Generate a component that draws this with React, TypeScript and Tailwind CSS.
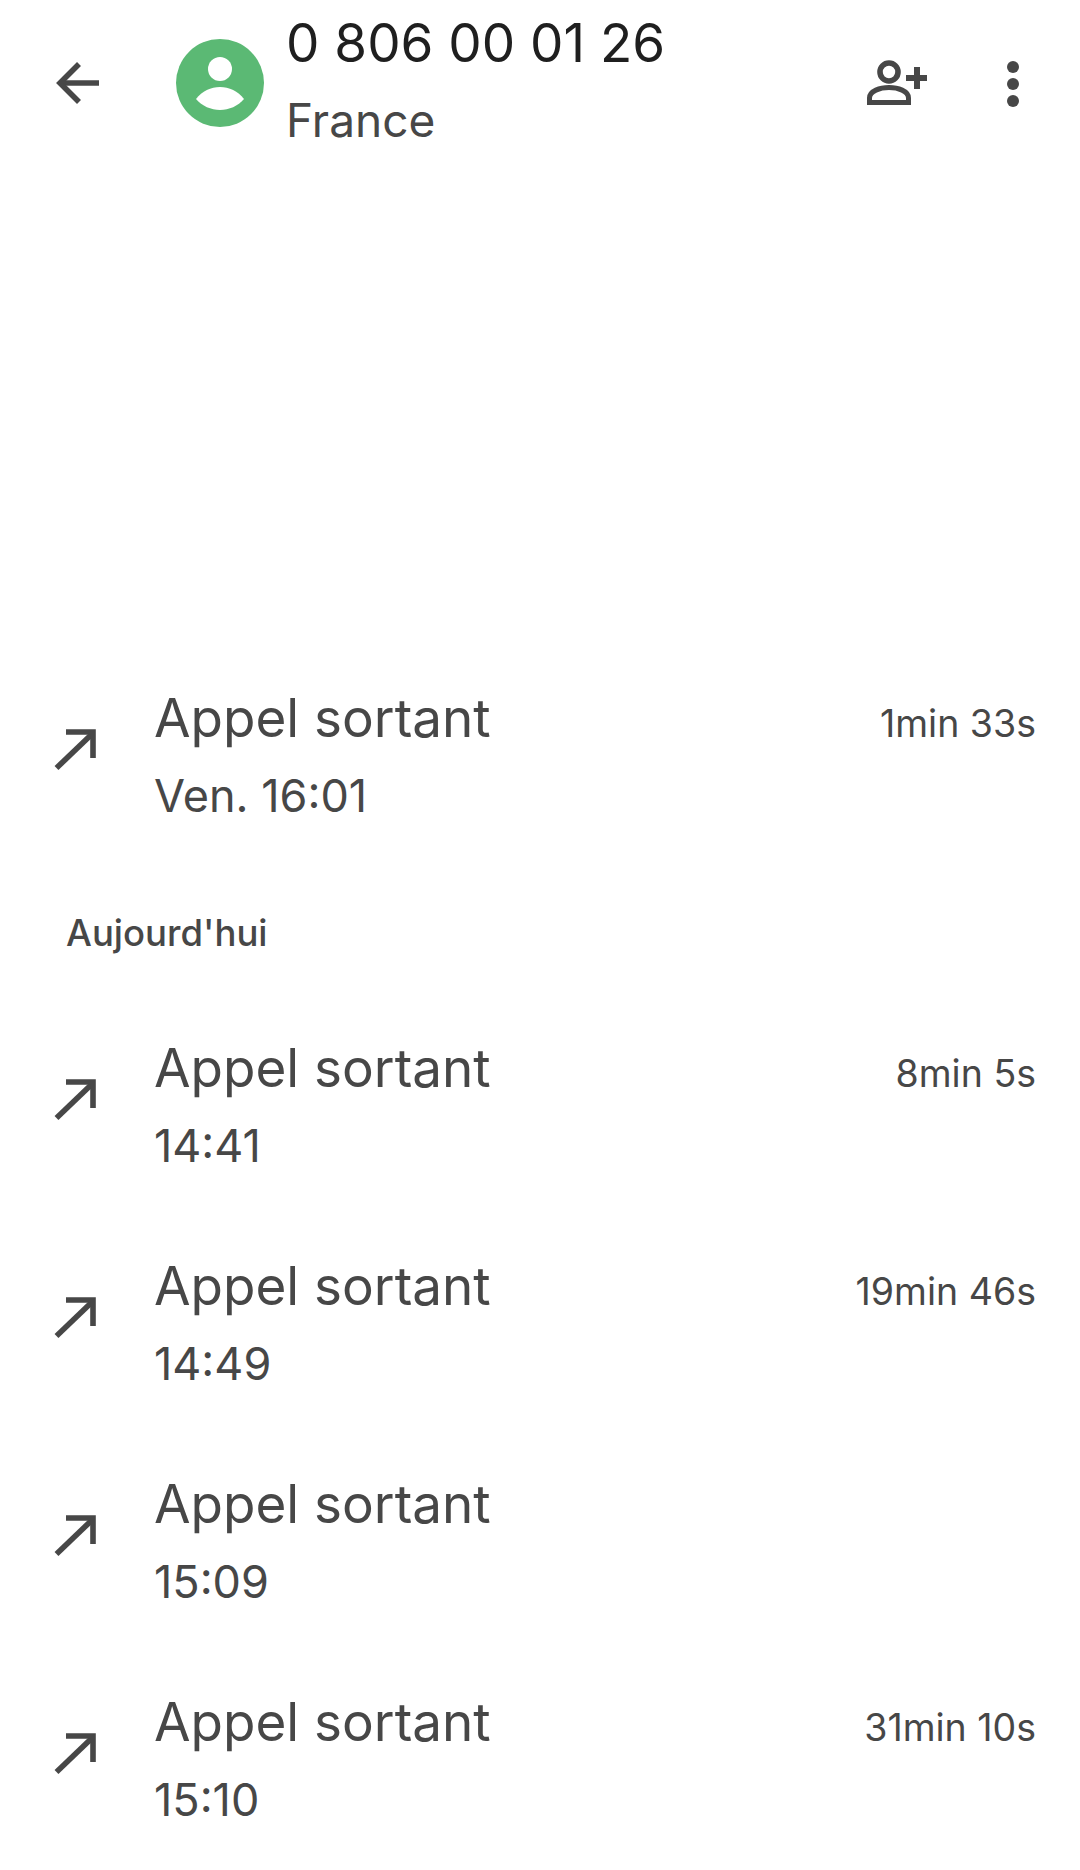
const font = { fontFamily: 'Inter, sans-serif' };

function CallArrow() {
  return (
    <svg width="44" height="44" viewBox="0 0 44 44" fill="none" stroke="#474747" strokeWidth="5.6">
      <path d="M2.5 39 L38 5" />
      <path d="M12 3 H39 V29" />
    </svg>
  );
}

type Call = { time: string; duration?: string };

function CallRow({ call, height = "h-[218px]" }: { call: Call; height?: string }) {
  return (
    <div className={`flex items-start pl-[54px] pr-[44px] ${height}`}>
      <div className="mt-[43px] w-[100px] shrink-0">
        <CallArrow />
      </div>
      <div className="flex-1">
        <div className="text-[53px] leading-[64px] text-[#474747]">Appel sortant</div>
        <div className="mt-[19px] text-[45px] leading-[54px] text-[#474747]">{call.time}</div>
      </div>
      {call.duration && <div className="mt-[15px] text-[37.5px] leading-[46px] text-[#474747]">{call.duration}</div>}
    </div>
  );
}

export default function App() {
  const calls: Call[] = [
    { time: "14:41", duration: "8min 5s" },
    { time: "14:49", duration: "19min 46s" },
    { time: "15:09" },
    { time: "15:10", duration: "31min 10s" },
  ];

  return (
    <div className="h-[1870px] w-[1080px] overflow-hidden bg-white" style={font}>
      <header className="flex h-[166px] items-start pl-[55px] pr-[61px]">
        <svg className="mt-[61px]" width="44" height="44" viewBox="0 0 44 44" fill="none" stroke="#474747" strokeWidth="5.6">
          <path d="M44 22 H5" />
          <path d="M24 3 L5 22 L24 41" />
        </svg>
        <div className="ml-[77px] mt-[39px] h-[88px] w-[88px] rounded-full bg-[#5bb974]">
          <svg width="88" height="88" viewBox="0 0 88 88" fill="white">
            <circle cx="44" cy="30" r="12" />
            <path d="M20 60 C26 52 35 48 44 48 C53 48 62 52 68 60 C62 67 53 71 44 71 C35 71 26 67 20 60 Z" />
          </svg>
        </div>
        <div className="ml-[22px] flex-1">
          <div className="mt-[11px] text-[53px] leading-[64px] text-[#1f1f1f]">0 806 00 01 26</div>
          <div className="mt-[18px] text-[46px] leading-[54px] text-[#474747]">France</div>
        </div>
        <svg className="mt-[60px]" width="64" height="46" viewBox="0 0 64 46" fill="none" stroke="#474747">
          <circle cx="24" cy="12" r="9" strokeWidth="5.6" />
          <path d="M4.5 42.5 V38 C4.5 31 15 27.5 24 27.5 C33 27.5 43.5 31 43.5 38 V42.5 Z" strokeWidth="5" />
          <path d="M41 18 H62 M52 7 V29" strokeWidth="6" />
        </svg>
        <div className="ml-[78px] mt-[61px] flex w-[12px] flex-col gap-[5px]">
          <div className="h-[12px] w-[12px] rounded-full bg-[#474747]" />
          <div className="h-[12px] w-[12px] rounded-full bg-[#474747]" />
          <div className="h-[12px] w-[12px] rounded-full bg-[#474747]" />
        </div>
      </header>
      <main className="pt-[520px]">
        <CallRow call={{ time: "Ven. 16:01", duration: "1min 33s" }} height="h-[194px]" />
        <div className="h-[156px] pl-[66px] pt-[30px] text-[36.5px] font-medium leading-[46px] text-[#474747]">Aujourd'hui</div>
        {calls.map((c) => (
          <CallRow key={c.time} call={c} />
        ))}
      </main>
    </div>
  );
}
